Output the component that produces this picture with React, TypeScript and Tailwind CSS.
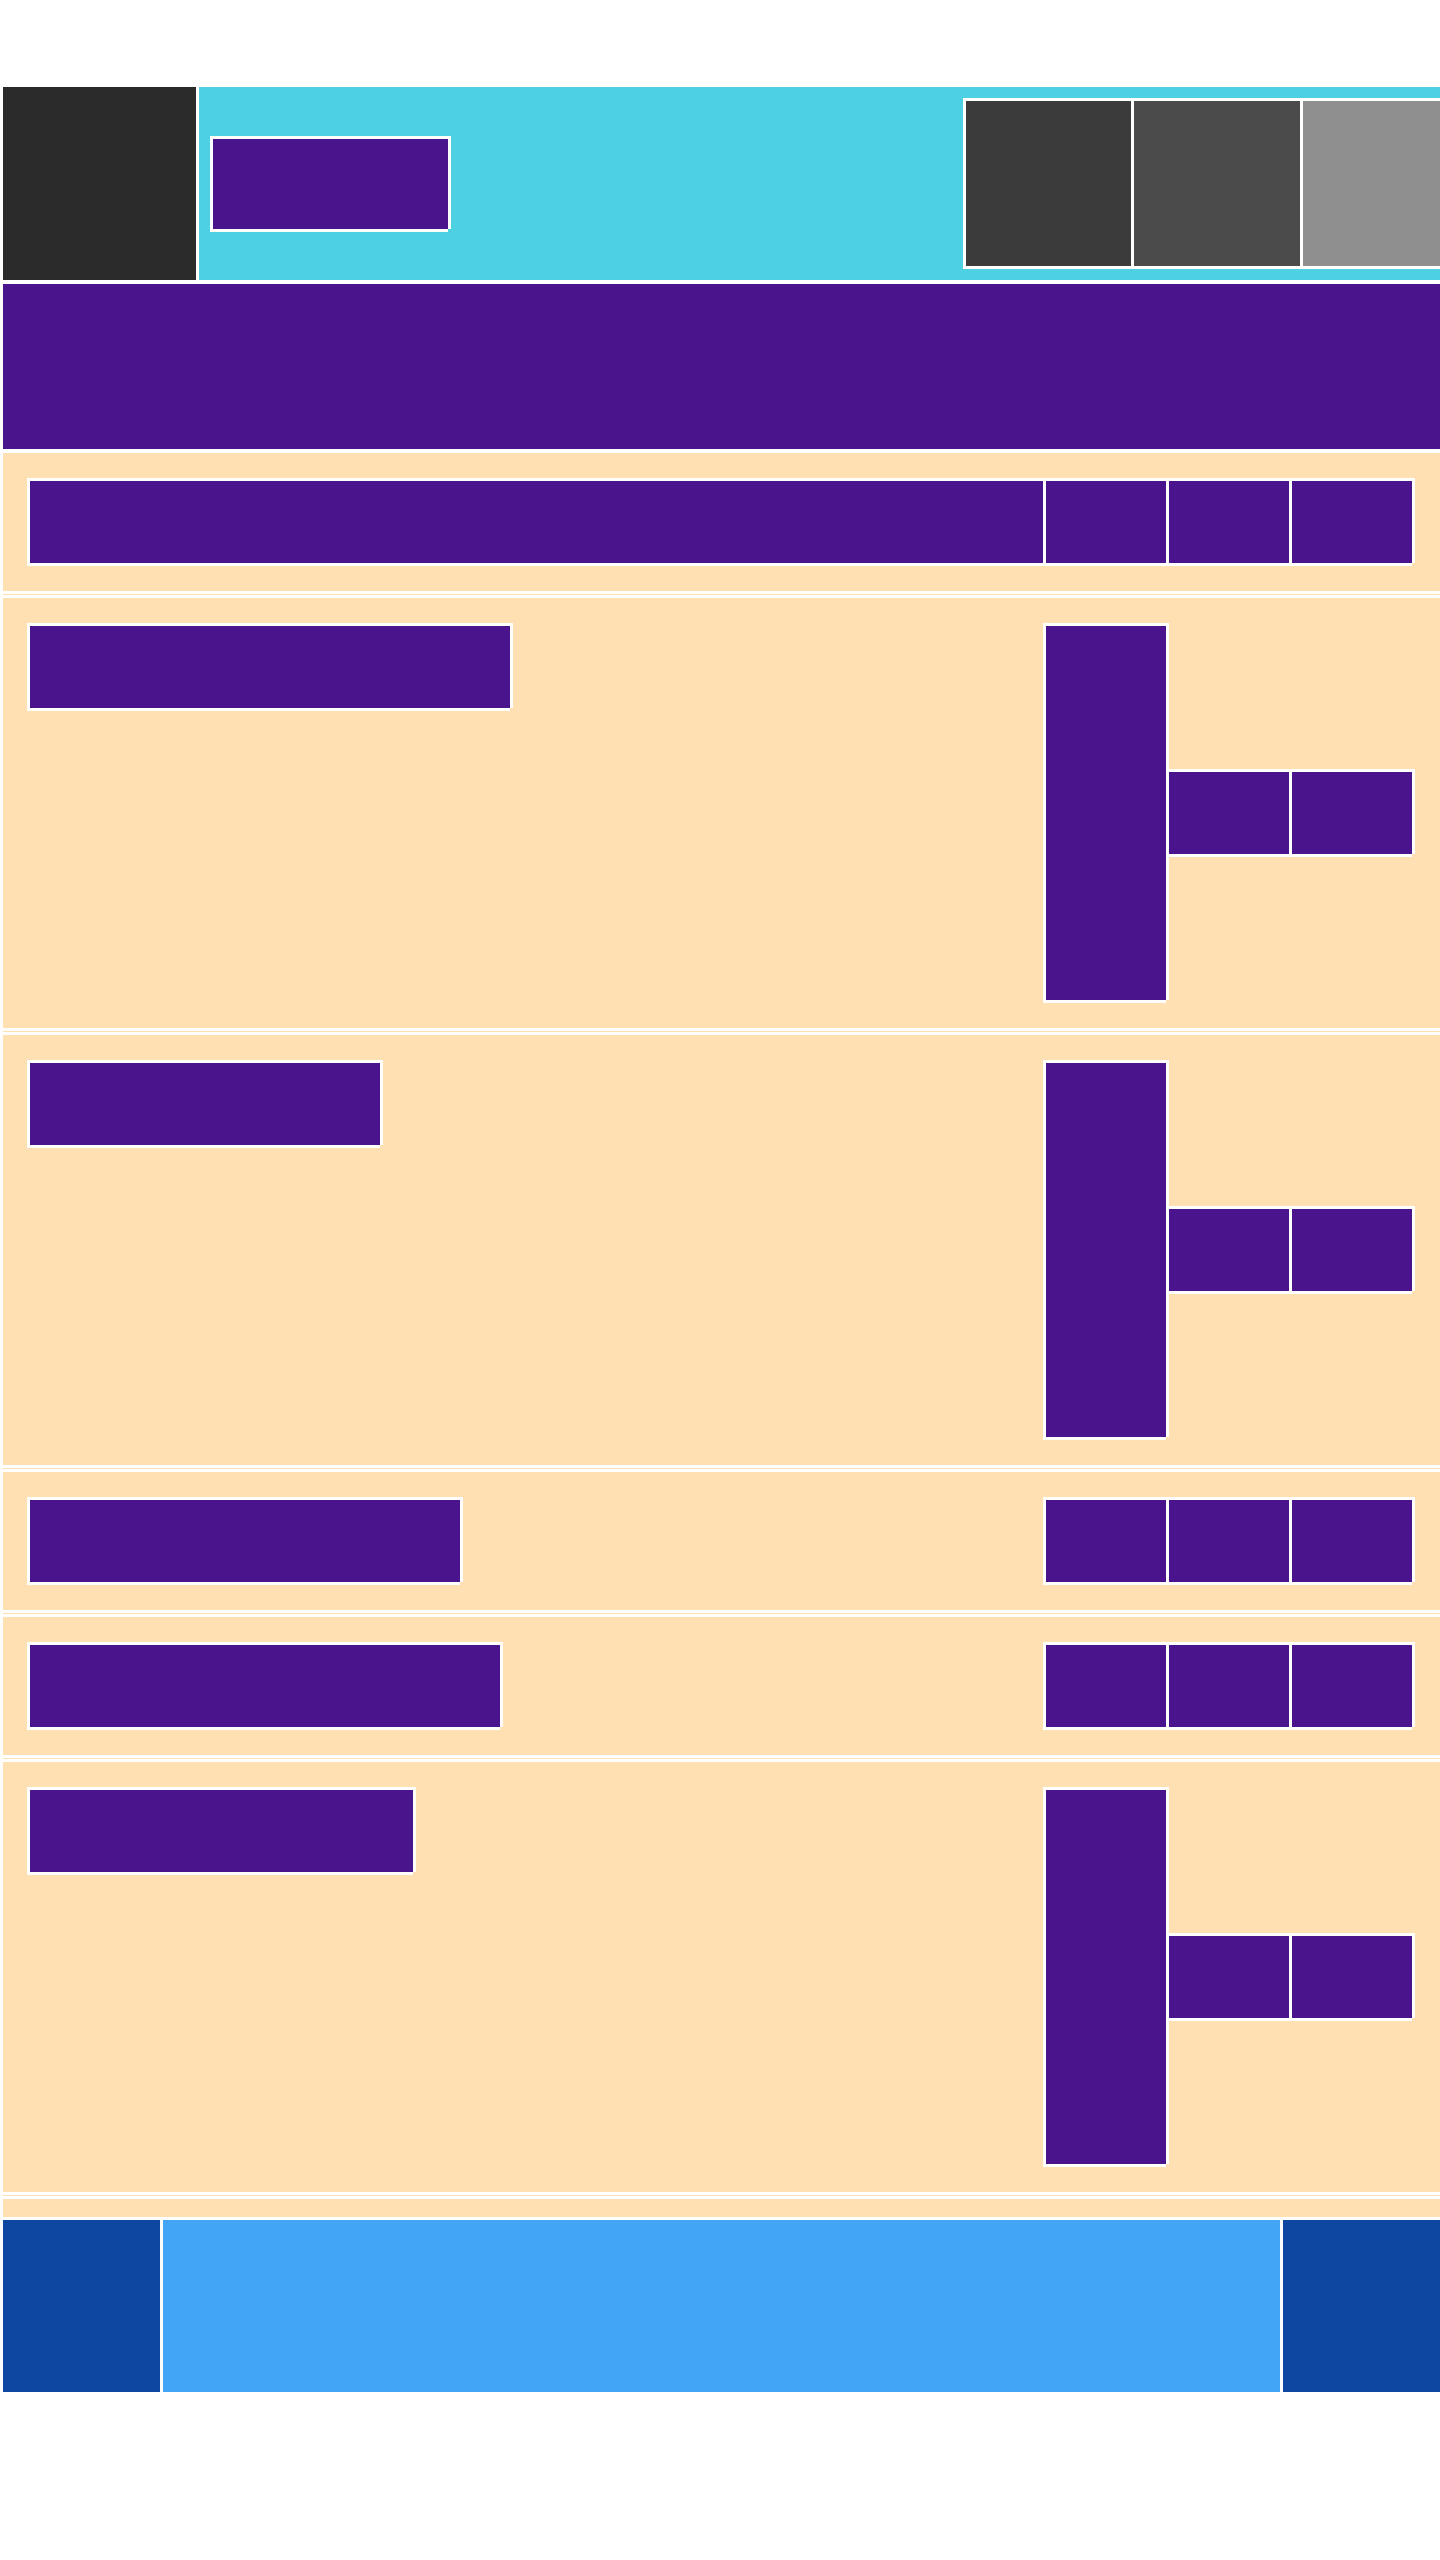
const frame =
  "shadow-[-3px_-3px_0_0_#fff,3px_-3px_0_0_#fff,3px_0_0_0_#fff,0_3px_0_0_#fff,-3px_3px_0_0_#fff]";

function Block({ className }: { className: string }) {
  return <div className={`shrink-0 bg-[#4a148c] ${frame} ${className}`} />;
}

function Divider() {
  return <div className="h-[7px] border-y-[3px] border-white bg-[#ffe0b2]" />;
}

function ShortRow() {
  return (
    <div className="flex gap-[3px]">
      <Block className="w-[120px] h-[82px]" />
      <Block className="w-[120px] h-[82px]" />
      <Block className="w-[120px] h-[82px]" />
    </div>
  );
}

function TallGroup() {
  return (
    <div className="flex items-center gap-[3px]">
      <Block className="w-[120px] h-[374px]" />
      <Block className="w-[120px] h-[82px]" />
      <Block className="w-[120px] h-[82px]" />
    </div>
  );
}

export default function App() {
  return (
    <div className="w-[1440px] min-h-[2560px] overflow-hidden bg-white pt-[87px] pl-[3px]">
      {/* header */}
      <div className="flex h-[193px]">
        <div className="w-[193px] shrink-0 bg-[#2b2b2b]" />
        <div className="ml-[3px] flex-1 flex items-center pl-[14px] bg-[#4dd0e1]">
          <Block className="w-[235px] h-[90px]" />
          <div className={`ml-[518px] shrink-0 flex gap-[3px] bg-white ${frame}`}>
            <div className="w-[165px] h-[165px] bg-[#3b3b3b]" />
            <div className="w-[166px] h-[165px] bg-[#4b4b4b]" />
            <div className="w-[166px] h-[165px] bg-[#8f8f8f]" />
          </div>
        </div>
      </div>

      <div className="mt-[4px] h-[165px] bg-[#4a148c]" />

      {/* list */}
      <div className="mt-[4px] bg-[#ffe0b2]">
        <div className="flex items-center pl-[27px] pr-[28px] py-[28px]">
          <Block className="flex-1 h-[82px] mr-[3px]" />
          <ShortRow />
        </div>
        <Divider />
        <div className="flex justify-between pl-[27px] pr-[28px] py-[28px]">
          <Block className="w-[480px] h-[82px]" />
          <TallGroup />
        </div>
        <Divider />
        <div className="flex justify-between pl-[27px] pr-[28px] py-[28px]">
          <Block className="w-[350px] h-[82px]" />
          <TallGroup />
        </div>
        <Divider />
        <div className="flex justify-between items-center pl-[27px] pr-[28px] py-[28px]">
          <Block className="w-[430px] h-[82px]" />
          <ShortRow />
        </div>
        <Divider />
        <div className="flex justify-between items-center pl-[27px] pr-[28px] py-[28px]">
          <Block className="w-[470px] h-[82px]" />
          <ShortRow />
        </div>
        <Divider />
        <div className="flex justify-between pl-[27px] pr-[28px] py-[28px]">
          <Block className="w-[383px] h-[82px]" />
          <TallGroup />
        </div>
        <Divider />
        <div className="h-[18px]" />
      </div>

      {/* footer */}
      <div className="mt-[3px] flex gap-[3px] h-[172px]">
        <div className="w-[157px] shrink-0 bg-[#0d47a1]" />
        <div className="flex-1 bg-[#42a5f5]" />
        <div className="w-[157px] shrink-0 bg-[#0d47a1]" />
      </div>
    </div>
  );
}
